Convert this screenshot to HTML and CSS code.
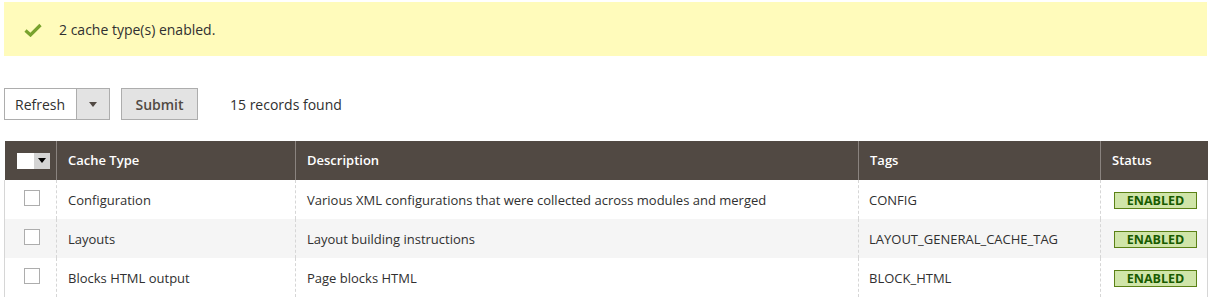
FILE: index.html
```html
<!DOCTYPE html>
<html>
<head>
<meta charset="utf-8">
<link rel="stylesheet" href="styles.css">
</head>
<body>
<div class="page">
  <div class="message">
    <svg class="check" width="18" height="14" viewBox="0 0 18 14"><path d="M1.5 7.5 L6.5 12 L16.5 2" fill="none" stroke="#79a22e" stroke-width="3.2"/></svg>
    <span>2 cache type(s) enabled.</span>
  </div>
  <div class="toolbar">
    <div class="select">
      <span class="select-label">Refresh</span>
      <span class="select-arrow"><span class="tri"></span></span>
    </div>
    <button class="btn">Submit</button>
    <span class="count">15 records found</span>
  </div>
  <table class="grid">
    <colgroup>
      <col class="c1"><col class="c2"><col class="c3"><col class="c4"><col class="c5">
    </colgroup>
    <thead>
      <tr>
        <th class="cb-head"><span class="mass"><span class="mass-box"></span><span class="mass-arrow"><span class="tri dark"></span></span></span></th>
        <th>Cache Type</th>
        <th>Description</th>
        <th>Tags</th>
        <th>Status</th>
      </tr>
    </thead>
    <tbody>
      <tr>
        <td class="cb"><span class="box"></span></td>
        <td>Configuration</td>
        <td>Various XML configurations that were collected across modules and merged</td>
        <td class="tag">CONFIG</td>
        <td><span class="badge">ENABLED</span></td>
      </tr>
      <tr class="alt">
        <td class="cb"><span class="box"></span></td>
        <td>Layouts</td>
        <td>Layout building instructions</td>
        <td class="tag">LAYOUT_GENERAL_CACHE_TAG</td>
        <td><span class="badge">ENABLED</span></td>
      </tr>
      <tr>
        <td class="cb"><span class="box"></span></td>
        <td>Blocks HTML output</td>
        <td>Page blocks HTML</td>
        <td class="tag">BLOCK_HTML</td>
        <td><span class="badge">ENABLED</span></td>
      </tr>
    </tbody>
  </table>
</div>
</body>
</html>
```
FILE: styles.css
```css
* { box-sizing: border-box; }
body {
  margin: 0;
  background: #fff;
  font-family: "Open Sans", "Liberation Sans", sans-serif;
  font-size: 13px;
  color: #303030;
}
.page { padding: 2px 4px 0 4px; }
.message {
  height: 54px;
  background: #fffbbb;
  display: flex;
  align-items: center;
  padding-left: 20px;
  font-size: 14px;
  color: #303030;
}
.check { margin-right: 17px; margin-top: 1px; }
.toolbar {
  display: flex;
  align-items: center;
  margin-top: 32px;
  height: 32px;
}
.select {
  display: flex;
  height: 32px;
  border: 1px solid #adadad;
  width: 106px;
}
.select-label {
  width: 72px;
  display: flex;
  align-items: center;
  padding-left: 10px;
  font-size: 14px;
  border-right: 1px solid #adadad;
}
.select-arrow {
  flex: 1;
  background: #e3e3e3;
  display: flex;
  align-items: center;
  justify-content: center;
}
.tri {
  width: 0; height: 0;
  border-left: 4px solid transparent;
  border-right: 4px solid transparent;
  border-top: 5px solid #514943;
}
.tri.dark { border-top-color: #000; }
.btn {
  margin-left: 11px;
  height: 32px;
  width: 77px;
  background: #e3e3e3;
  border: 1px solid #adadad;
  font-family: inherit;
  font-size: 14px;
  font-weight: 600;
  color: #514943;
  padding: 0;
}
.count { margin-left: 32px; font-size: 14px; }
.grid {
  margin-top: 21px;
  width: 1203px;
  border-collapse: collapse;
  table-layout: fixed;
}
.c1 { width: 52px; }
.c2 { width: 239px; }
.c3 { width: 563px; }
.c4 { width: 242px; }
.c5 { width: 107px; }
.grid th {
  background: #514943;
  color: #fff;
  font-weight: 600;
  text-align: left;
  height: 39px;
  padding: 0 11px 1px 11px;
  border-left: 1px solid #8a837f;
}
.grid th:first-child { border-left: none; }
.grid td {
  height: 39px;
  padding: 0 11px;
  border-left: 1px dashed #d6d6d6;
}
.grid td.tag { padding-left: 10px; }
.grid td:first-child { border-left: 1px solid #d6d6d6; }
.grid td:last-child { border-right: 1px solid #d6d6d6; }
.grid tr.alt td { background: #f5f5f5; }
.cb-head { padding: 0 !important; }
.mass {
  display: flex;
  margin-left: 12px;
  height: 16px;
  width: 33px;
}
.mass-box { width: 17px; background: #fff; }
.mass-arrow {
  width: 16px;
  background: #d4d4d4;
  display: flex;
  align-items: center;
  justify-content: center;
}
.grid td.cb { padding: 0 0 0 19px; }
.box {
  display: block;
  width: 16px;
  height: 16px;
  border: 1px solid #adadad;
  background: #fff;
  margin-top: -4px;
}
.badge {
  display: inline-block;
  background: #d0e5a9;
  border: 1px solid #5b8116;
  color: #185b00;
  font-weight: 700;
  font-size: 12.5px;
  line-height: 15px;
  width: 83px;
  text-align: center;
  margin-left: 2px;
}
```
